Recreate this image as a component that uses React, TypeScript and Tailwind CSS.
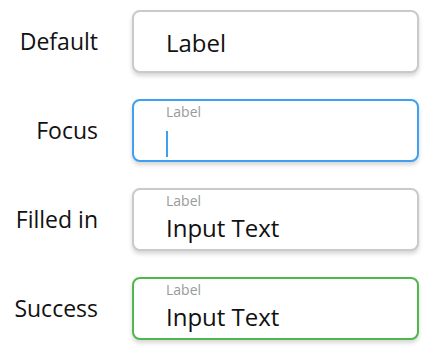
import React from 'react';

type FieldState = 'default' | 'focus' | 'filled' | 'success';

const rows: { title: string; state: FieldState }[] = [
  { title: 'Default', state: 'default' },
  { title: 'Focus', state: 'focus' },
  { title: 'Filled in', state: 'filled' },
  { title: 'Success', state: 'success' },
];

const borderFor: Record<FieldState, string> = {
  default: 'border-[#cacaca]',
  focus: 'border-[#3ea0f0]',
  filled: 'border-[#cacaca]',
  success: 'border-[#4fb84b]',
};

const Field: React.FC<{ state: FieldState }> = ({ state }) => {
  return (
    <div
      className={`w-[287px] h-[63px] rounded-[8px] border-2 bg-white shadow-[0_3px_4px_rgba(0,0,0,0.16)] pl-[32px] flex flex-col ${borderFor[state]}`}
    >
      {state === 'default' ? (
        <div className="flex-1 flex items-center text-[24px] text-[#111] pt-[2px]">Label</div>
      ) : (
        <>
          <div className="text-[14px] leading-none text-[#9a9a9a] mt-[4px]">Label</div>
          {state === 'focus' ? (
            <div className="mt-[12px] w-[2px] h-[26px] bg-[#3ea0f0]" />
          ) : (
            <div className="text-[24px] leading-none text-[#111] mt-[8px]">Input Text</div>
          )}
        </>
      )}
    </div>
  );
};

export default function App() {
  return (
    <div className="w-[435px] h-[353px] bg-white pt-[10px] flex flex-col gap-[26px] font-['Open_Sans',sans-serif]">
      {rows.map((row) => (
        <div key={row.title} className="flex items-center">
          <div className="w-[98px] text-right text-[23px] text-[#111] whitespace-nowrap">{row.title}</div>
          <div className="ml-[34px]">
            <Field state={row.state} />
          </div>
        </div>
      ))}
    </div>
  );
}
